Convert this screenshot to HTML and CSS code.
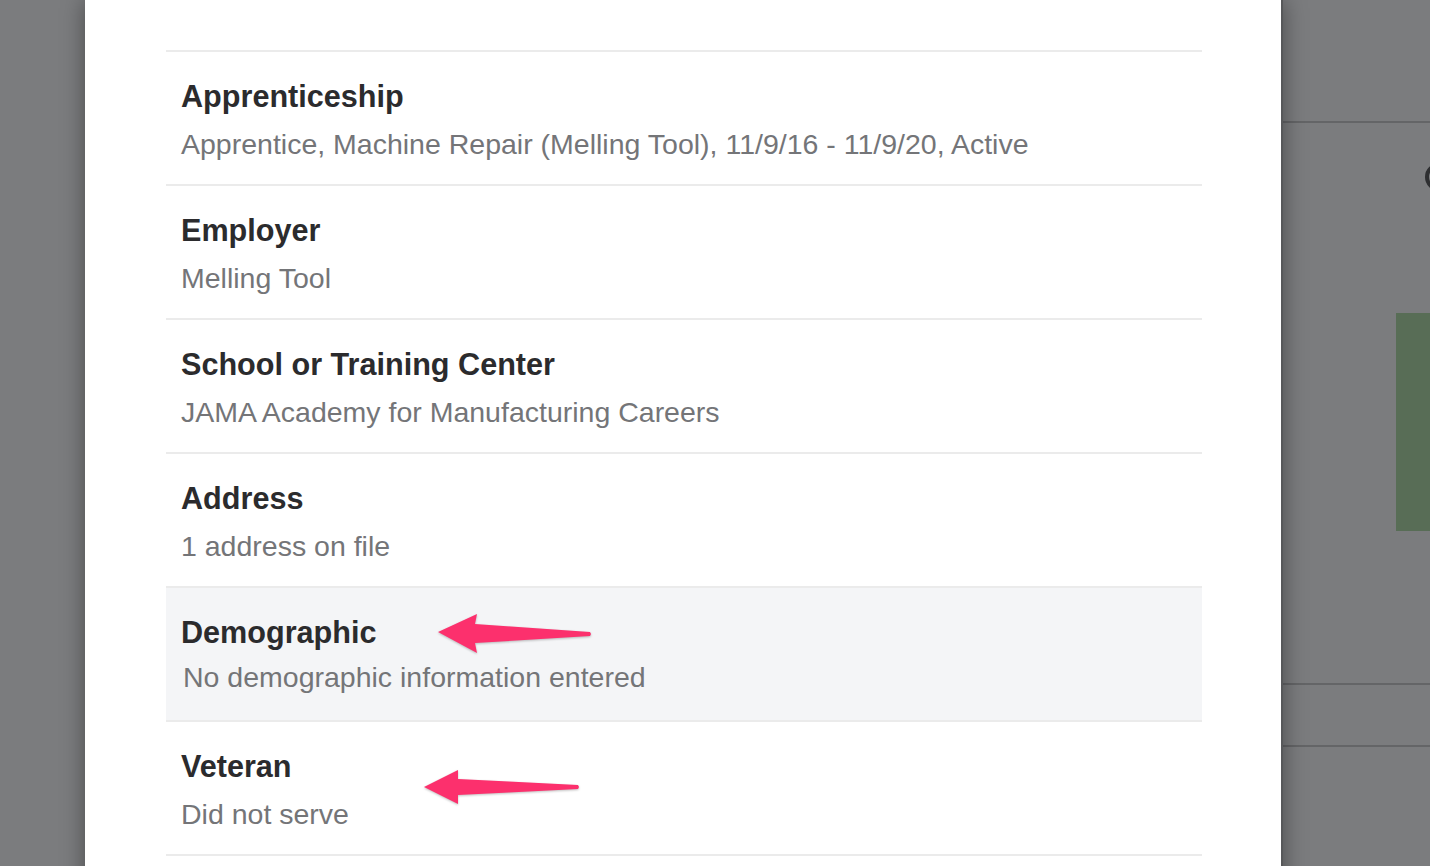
FILE: index.html
```html
<!DOCTYPE html>
<html>
  <head>
    <title>Profile details</title>
    <link rel="stylesheet" href="styles.css">
  </head>

  <body>
    <!-- page behind the modal -->
    <div class="page">
      <div class="page-top"></div>
      <div class="page-main">
        <div class="page-aside">
          <div class="page-heading"></div>
          <div class="page-card"></div>
        </div>
      </div>
      <div class="page-row"></div>
    </div>

    <div class="modal">
      <ul class="details">
        <li class="detail">
          <div class="detail-title">Apprenticeship</div>
          <div class="detail-value">Apprentice, Machine Repair (Melling Tool), 11/9/16 - 11/9/20, Active</div>
        </li>
        <li class="detail">
          <div class="detail-title">Employer</div>
          <div class="detail-value">Melling Tool</div>
        </li>
        <li class="detail">
          <div class="detail-title">School or Training Center</div>
          <div class="detail-value">JAMA Academy for Manufacturing Careers</div>
        </li>
        <li class="detail">
          <div class="detail-title">Address</div>
          <div class="detail-value">1 address on file</div>
        </li>
        <li class="detail detail-hover">
          <div class="detail-title">Demographic</div>
          <div class="detail-value">No demographic information entered</div>
          <svg class="arrow arrow-demographic" width="170" height="55" viewBox="0 0 170 55">
            <polygon points="8,27 47,9 45,19 160,27 161,29 160,31 45,38 47,48" />
          </svg>
        </li>
        <li class="detail">
          <div class="detail-title">Veteran</div>
          <div class="detail-value">Did not serve</div>
          <svg class="arrow arrow-veteran" width="170" height="50" viewBox="0 0 170 50">
            <polygon points="9,25 43,8 43,17 163,23 164,25 163,27 43,33 43,42" />
          </svg>
        </li>
      </ul>
    </div>
  </body>
</html>
```

FILE: styles.css
```css
body {
  margin: 0;
  background-color: #7b7c7e;
  font-family: 'Liberation Sans', Arial, sans-serif;
  overflow: hidden;
}

/* page behind */

.page {
  display: flex;
  flex-direction: column;
  height: 866px;
  margin-left: 1281px;
}

.page-top {
  height: 121px;
  border-bottom: 2px solid #646567;
}

.page-main {
  height: 560px;
  display: flex;
  border-bottom: 2px solid #646567;
}

.page-aside {
  margin-left: auto;
  width: 34px;
  overflow: hidden;
}

.page-heading {
  margin: 40px 0 0 29px;
  width: 20px;
  height: 20px;
  border-radius: 50%;
  border: 4px solid #2e2f31;
}

.page-card {
  margin-top: 122px;
  height: 218px;
  background-color: #586d56;
}

.page-row {
  height: 60px;
  border-bottom: 2px solid #646567;
}

/* modal */

.modal {
  position: absolute;
  top: 0;
  left: 85px;
  width: 1196px;
  height: 900px;
  background-color: #fff;
  border-right: 2px solid #57585a;
  box-shadow: 0 0 22px rgba(0, 0, 0, 0.4);
}

.details {
  list-style: none;
  margin: 50px 79px 0 81px;
  padding: 0;
  border-top: 2px solid #ebebeb;
}

.detail {
  position: relative;
  padding: 26px 15px 0 15px;
  box-sizing: border-box;
  height: 134px;
  border-bottom: 2px solid #ebebeb;
}

.detail-hover {
  background-color: #f4f5f7;
}

.detail-title {
  font-size: 30.6px;
  font-weight: bold;
  line-height: 36px;
  color: #2b2b2d;
}

.detail-value {
  margin-top: 12px;
  font-size: 28.5px;
  line-height: 36px;
  color: #747578;
}

.detail-hover .detail-value {
  margin-top: 9px;
  padding-left: 2px;
}

.arrow {
  position: absolute;
  fill: #fc306d;
  filter: drop-shadow(0 1px 1px rgba(0, 0, 0, 0.25));
}

.arrow-demographic {
  left: 264px;
  top: 17px;
}

.arrow-veteran {
  left: 249px;
  top: 40px;
}
```
